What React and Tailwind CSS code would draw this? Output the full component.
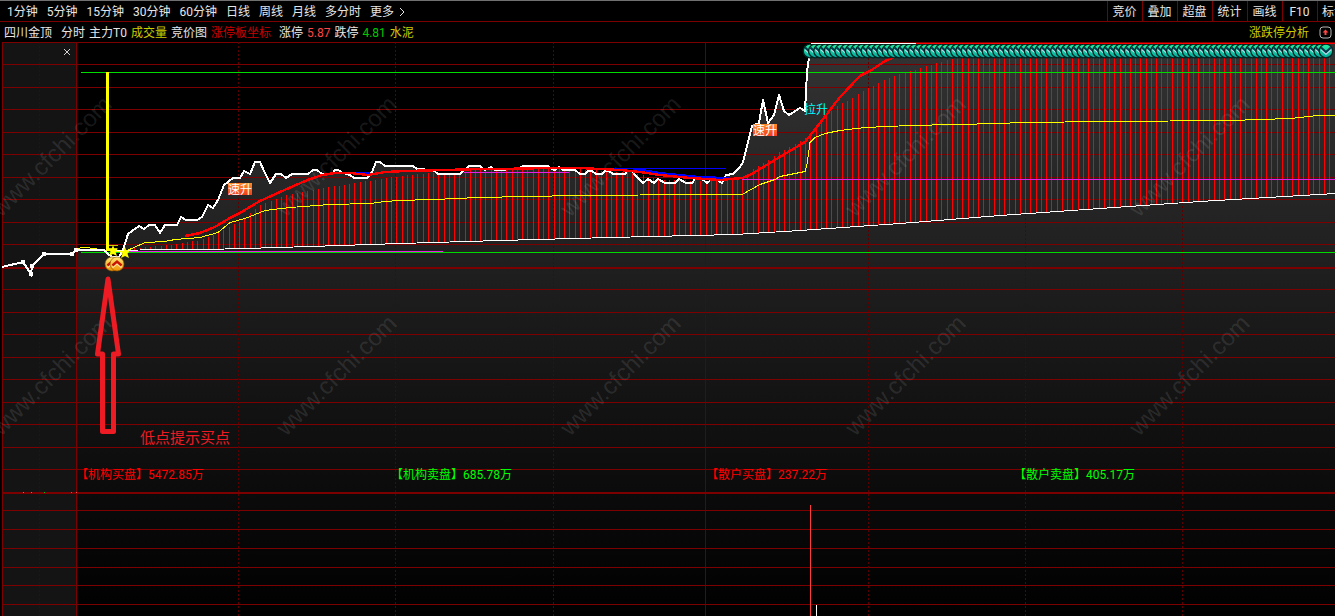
const periods = ['1分钟', '5分钟', '15分钟', '30分钟', '60分钟', '日线', '周线', '月线', '多分时']

const tools = ['竞价', '叠加', '超盘', '统计', '画线', 'F10']

const rowLines = [64, 87, 109, 132, 154, 177, 199, 222, 244, 289, 312, 334, 357, 379, 402, 424, 447, 469, 510, 529, 548, 567, 585, 604]
const dottedColumns = [238, 395, 553, 868, 1025, 1182]

const preOpen = '2,267 23,262 31,274 32,266 44,254 72,254 76,250'

const price =
  '76,250 104,250 108,254 112,257 119,257 123,250 128,234 139,226 144,229 149,225 155,225 160,233 165,225 177,225 181,217 186,220 197,220 202,217 208,205 213,208 218,200 224,185 233,178 240,178 244,171 250,174 255,162 260,162 265,173 270,183 276,174 281,174 286,178 292,174 308,174 313,170 317,170 322,174 332,174 335,170 338,170 343,173 350,175 354,178 367,178 372,172 376,162 380,162 385,166 413,166 417,169 433,170 438,174 460,174 469,166 480,166 485,170 491,167 495,170 518,169 523,166 548,166 552,169 555,170 559,167 563,170 575,170 580,174 585,174 588,171 592,171 596,174 602,174 605,171 609,171 613,174 625,174 627,171 632,171 635,175 643,183 648,179 654,183 658,179 665,183 675,183 679,179 686,183 692,183 695,179 702,179 707,183 712,179 717,180 722,183 726,175 733,174 740,167 743,162 752,126 759,123 763,100 768,123 774,115 779,95 784,111 789,115 800,108 805,111 807,72 809,57 809,44'

const average =
  '185,236 200,233 215,227 230,218 240,213 260,201 280,192 305,181 322,175 335,173 350,173 368,175 385,172 405,171 445,170 480,169 500,169 550,168 580,168 620,170 640,172 660,175 690,178 720,180 742,178 750,175 765,166 780,157 805,142 820,123 840,97 860,76 870,71 885,61 895,57'

const cost =
  '76,248 84,247 95,248 104,250 125,251 145,242 165,241 175,239 200,237 218,232 230,222 245,218 265,210 290,207 330,204 370,203 385,201 400,200 460,198 475,197 530,196 575,195 705,194 742,194 760,184 775,179 780,176 805,171 807,164 810,142 815,137 825,133 840,130 865,127 910,125 1000,123 1020,122 1110,121 1230,120 1290,118 1318,115 1335,115'

const barTops = [[128, 249], [170, 245], [200, 240], [222, 231], [240, 221], [260, 205], [290, 194], [330, 187], [360, 182], [400, 176], [430, 173], [460, 173], [475, 169], [575, 169], [635, 173], [660, 180], [720, 181], [742, 177], [752, 170], [778, 153], [805, 138], [815, 128], [836, 106], [850, 99], [868, 88], [890, 77], [920, 68], [940, 62], [960, 57], [1335, 57]]
const base = [[76, 250], [205, 249], [245, 248], [310, 246], [400, 243], [500, 240], [610, 237], [735, 234], [800, 230], [900, 223], [1000, 215], [1100, 208], [1200, 201], [1335, 193]]

function valueAt(points, x) {
  const i = Math.max(1, points.findIndex((p) => p[0] >= x))
  const [x0, y0] = points[i - 1]
  const [x1, y1] = points[i]
  return y0 + ((y1 - y0) * (x - x0)) / (x1 - x0)
}

const minuteX = (i) => 82 + i * 5.24

const bars = Array.from({ length: 230 }, (_, n) => Math.round(minuteX(n + 9)))
  .filter((x) => x < 1335)
  .map((x) => ({ x, top: valueAt(barTops, x), bottom: valueAt(base, x) }))

const limitMarks = Array.from({ length: 99 }, (_, n) => 810 + n * 5.265)

const readouts = [
  { x: 76, label: '【机构买盘】', value: '5472.85万', color: '#ff0000' },
  { x: 391, label: '【机构卖盘】', value: '685.78万', color: '#00ff00' },
  { x: 706, label: '【散户买盘】', value: '237.22万', color: '#ff0000' },
  { x: 1014, label: '【散户卖盘】', value: '405.17万', color: '#00ff00' },
]

const watermarks = [218, 437].flatMap((y) => [1, 286, 570, 855, 1139].map((x) => ({ x, y })))

function LimitMark({ x }) {
  return (
    <g transform={`translate(${x} 51)`}>
      <circle r="6.8" fill="url(#teal)" stroke="#002420" strokeWidth="1.3" />
      <path d="M-5 -1.500 0 3 5 -1.500" fill="none" stroke="#c8dcf0" strokeWidth="1.6" />
      <path d="M-5 -3.500 0 1 5 -3.500" fill="none" stroke="#003c50" strokeWidth="2.2" />
    </g>
  )
}

function GoldMark({ x }) {
  return (
    <g transform={`translate(${x} 264)`}>
      <circle r="7" fill="url(#gold)" stroke="#8c5000" strokeWidth="0.6" />
      <path d="M-4.5 3.5 0 -0.5 4.5 3.5" fill="none" stroke="#fff0b0" strokeWidth="1.6" />
      <path d="M-4.5 1.5 0 -2.5 4.5 1.5" fill="none" stroke="#c81400" strokeWidth="2.4" />
    </g>
  )
}

function Star({ x, y }) {
  return <path transform={`translate(${x} ${y})`} d="M0 -6 1.4 -2 5 -2.5 2.5 .8 4 5 0 3 -4 5 -2.5 .8 -5 -2.5 -1.4 -2Z" fill="#ffff00" />
}

function SpeedTag({ x, y }) {
  return (
    <g>
      <rect x={x} y={y} width="24" height="12" fill="url(#tag)" />
      <text x={x} y={y + 11} fill="#fff" fontSize="12">速升</text>
    </g>
  )
}

function Chart() {
  return (
    <svg viewBox="0 42 1335 574" className="block h-auto w-full" role="img" aria-label="四川金顶 分时图">
      <defs>
        <linearGradient id="area" gradientUnits="userSpaceOnUse" x1="0" y1="42" x2="0" y2="616">
          <stop offset="0" stopColor="#333333" />
          <stop offset="1" stopColor="#000000" />
        </linearGradient>
        <linearGradient id="teal" x1="0" y1="0" x2="0" y2="1">
          <stop offset="0" stopColor="#28f0a0" />
          <stop offset="1" stopColor="#00a8a0" />
        </linearGradient>
        <linearGradient id="gold" x1="0" y1="0" x2="0" y2="1">
          <stop offset="0" stopColor="#ffe878" />
          <stop offset="1" stopColor="#f09000" />
        </linearGradient>
        <linearGradient id="tag" x1="0" y1="0" x2="0" y2="1">
          <stop offset="0" stopColor="#ff8c28" />
          <stop offset="1" stopColor="#f03c1e" />
        </linearGradient>
      </defs>

      <rect x="2" y="42" width="75" height="574" fill="#141414" />
      <polygon points={`${price} 1335,44 1335,616 77,616`} fill="url(#area)" />

      <g shapeRendering="crispEdges" stroke="#7d0000" strokeWidth="1" fill="none">
        {rowLines.map((y) => (
          <path key={y} d={`M2 ${y + 0.5}H1335`} />
        ))}
        <path d="M2 42.5H1335M2.5 42V616M76.5 42V616" />
        <path d="M705.5 42V616" stroke="#640000" />
        <path d="M2 268H1335M2 493H1335" strokeWidth="2" />
        <path d="M39.5 42V616" stroke="#500000" strokeDasharray="2 2" />
        {dottedColumns.map((x) => (
          <path key={x} d={`M${x + 0.5} 42V616`} stroke="#5a0000" strokeDasharray="2 2" />
        ))}
      </g>

      <g shapeRendering="crispEdges" stroke="#ff0000">
        {bars.map((bar) => (
          <path key={bar.x} d={`M${bar.x + 0.5} ${bar.top}V${bar.bottom}`} />
        ))}
      </g>

      <g fill="#fff" fillOpacity="0.11" fontSize="24" fontFamily="Liberation Sans, sans-serif">
        {watermarks.map(({ x, y }) => (
          <text key={`${x}-${y}`} transform={`translate(${x} ${y}) rotate(-45)`}>www.cfchi.com</text>
        ))}
      </g>

      <g fill="none" shapeRendering="crispEdges">
        <path d="M125 251.5H443M464 172.5H569M742 179.5H1335" stroke="#e61ee6" />
        <path d="M81 72.5H1335M81 252.5H1335" stroke="#00dc00" />
        <g transform="translate(0 0.5)">
          <polyline points={base.map((p) => p.join(',')).join(' ')} stroke="#fff" />
          <polyline points={cost} stroke="#ffff00" />
        </g>
        <polyline points={preOpen} stroke="#fff" strokeWidth="2" />
        <polyline points={price} stroke="#fff" strokeWidth="2" strokeLinejoin="round" />
        <path d="M349 173H371M495 168.5H517M576 168.5H726" stroke="#0000ff" />
        <path d="M351 173H370M633 170H643L660 173L700 177L730 178" stroke="#0000ff" strokeWidth="2" />
        <polyline points={average} stroke="#ff0000" strokeWidth="2.4" strokeLinejoin="round" />
        <path d="M107.5 72V250" stroke="#ffff00" strokeWidth="3" />
      </g>

      <g fill="#fff" shapeRendering="crispEdges">
        <rect x="21" y="260" width="4" height="4" />
        <rect x="29" y="272" width="4" height="4" />
        <rect x="30" y="264" width="4" height="4" />
        <rect x="42" y="252" width="4" height="4" />
        <rect x="70" y="252" width="4" height="4" />
        <rect x="74" y="248" width="4" height="4" />
      </g>

      <path d="M109 245.5H118M109 248.5H117" stroke="#c8c800" />
      <Star x={113} y={251} />
      <Star x={125} y={253} />
      <GoldMark x={112} />
      <GoldMark x={117} />

      {limitMarks.map((x) => (
        <LimitMark key={x} x={x} />
      ))}
      <path d="M811 43.5H916" stroke="#fff" shapeRendering="crispEdges" />
      <path d="M916 43.5H1335" stroke="#ff0000" shapeRendering="crispEdges" />

      <path d="M108 279 97.5 354H102.5V431.5H113.5V354H118.5Z" fill="none" stroke="#ed1c24" strokeWidth="5" strokeLinejoin="round" />
      <text x="140" y="443" fill="#ed1c24" fontSize="15">低点提示买点</text>

      <SpeedTag x={228} y={183} />
      <SpeedTag x={753} y={124} />
      <text x="804" y="114" fill="#00ffff" fontSize="12">拉升</text>

      {readouts.map((item) => (
        <text key={item.label} x={item.x} y="479" fill={item.color} fontSize="12">
          {item.label}
          {item.value}
        </text>
      ))}

      {/* volume pane */}
      <g shapeRendering="crispEdges">
        <path d="M810.5 505V616" stroke="#ff3c3c" />
        <path d="M816.5 605V616" stroke="#fff" />
        <path d="M23 492.5H24M31 492.5H32M76 492.5H77" stroke="#ff5050" />
        <path d="M44 492.5H45M71 492.5H72" stroke="#00c800" />
      </g>
    </svg>
  )
}

function App() {
  return (
    <main className="min-h-screen overflow-hidden bg-black font-[Roboto,'Noto_Sans_CJK_SC',sans-serif] text-[12px] leading-4 text-[#e6e6e6]">
      <nav className="flex h-[22px] items-center justify-between border-t border-b border-t-[#707070] border-b-[#7d0000]">
        <div className="flex items-center gap-[9px] pt-px pl-[7px] whitespace-nowrap">
          {periods.map((period) => (
            <button key={period} type="button">{period}</button>
          ))}
          <button type="button" className="flex items-center gap-1">
            更多
            <svg viewBox="0 0 8 10" className="h-[10px] w-2" aria-hidden="true">
              <path d="M2 1 6 5 2 9" fill="none" stroke="currentColor" />
            </svg>
          </button>
        </div>
        <div className="flex h-full items-center">
          {tools.map((tool) => (
            <button key={tool} type="button" className="h-full w-[35px] border-l border-[#7d0000] pt-px pr-px text-center">{tool}</button>
          ))}
          <button type="button" className="h-full w-[18px] overflow-hidden border-l border-[#7d0000] pt-px pl-1 text-left whitespace-nowrap">标记</button>
        </div>
      </nav>

      <header className="flex h-5 items-center justify-between pt-px pr-[3px] pl-1 whitespace-nowrap">
        <div className="flex items-center gap-1">
          <span className="mr-[5px]">四川金顶</span>
          <span>分时</span>
          <span>主力T0</span>
          <span className="text-[#cccc00]">成交量</span>
          <span>竞价图</span>
          <span className="mr-1 text-[#c80000]">涨停板坐标</span>
          <span>涨停</span>
          <span className="text-[#ff4646]">5.87</span>
          <span>跌停</span>
          <span className="text-[#00c800]">4.81</span>
          <span className="text-[#cccc00]">水泥</span>
        </div>
        <div className="flex items-center gap-[10px]">
          <a href="#analysis" className="text-[#cccc00]">涨跌停分析</a>
          <button type="button" aria-label="展开">
            <svg viewBox="0 0 13 13" className="block size-[13px]" aria-hidden="true">
              <rect x="1" y="1" width="11" height="11" rx="3" fill="none" stroke="#b4b4b4" />
              <path d="M6.5 3.5 9.5 6.5H7.5V9H5.5V6.5H3.5Z" fill="#ff4646" />
            </svg>
          </button>
        </div>
      </header>

      <section className="relative">
        <Chart />
        <button type="button" aria-label="关闭" className="absolute top-1 left-[61px] p-[3px] text-[#d2d2d2]">
          <svg viewBox="0 0 6 6" className="block size-[6px]" aria-hidden="true">
            <path d="M0 0 6 6M6 0 0 6" stroke="currentColor" />
          </svg>
        </button>
      </section>
    </main>
  )
}

export default App
